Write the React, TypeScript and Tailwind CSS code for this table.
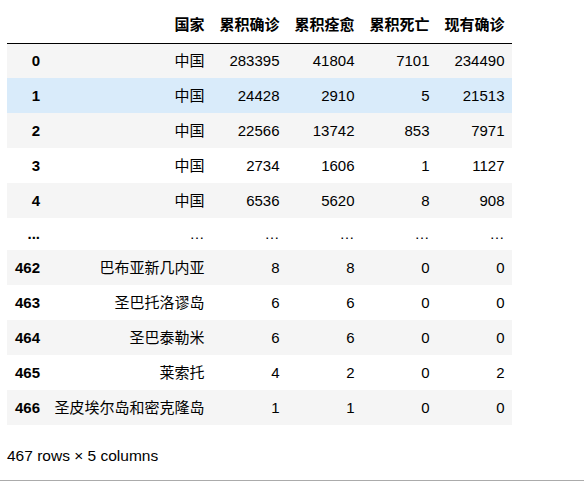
import React from "react";

type Row = [string, string, string, string, string, string];

const top: Row[] = [
  ["0", "中国", "283395", "41804", "7101", "234490"],
  ["1", "中国", "24428", "2910", "5", "21513"],
  ["2", "中国", "22566", "13742", "853", "7971"],
  ["3", "中国", "2734", "1606", "1", "1127"],
  ["4", "中国", "6536", "5620", "8", "908"],
];
const bottom: Row[] = [
  ["462", "巴布亚新几内亚", "8", "8", "0", "0"],
  ["463", "圣巴托洛谬岛", "6", "6", "0", "0"],
  ["464", "圣巴泰勒米", "6", "6", "0", "0"],
  ["465", "莱索托", "4", "2", "0", "2"],
  ["466", "圣皮埃尔岛和密克隆岛", "1", "1", "0", "0"],
];

const headers = ["国家", "累积确诊", "累积痊愈", "累积死亡", "现有确诊"];

function DataRow({ r, bg }: { r: Row; bg: string }) {
  return (
    <tr className={`h-[35px] ${bg}`}>
      <th className="px-[7px] text-right font-bold">{r[0]}</th>
      {r.slice(1).map((c, i) => (
        <td key={i} className="px-[7.5px] text-right font-normal">
          {c}
        </td>
      ))}
    </tr>
  );
}

export default function App() {
  return (
    <div
      className="min-h-[486px] bg-white pt-[7px] text-black"
      style={{ fontFamily: '"Liberation Sans", "Noto Sans CJK SC", sans-serif' }}
    >
      <div className="px-[7px]">
        <table className="table-fixed border-collapse text-[15px] leading-[18px]">
          <colgroup>
            <col className="w-[40px]" />
            <col className="w-[165px]" />
            <col className="w-[75px]" />
            <col className="w-[75px]" />
            <col className="w-[75px]" />
            <col className="w-[75px]" />
          </colgroup>
          <thead>
            <tr className="h-[36px] border-b border-black">
              <th></th>
              {headers.map((h) => (
                <th key={h} className="px-[7.5px] text-right font-bold">
                  {h}
                </th>
              ))}
            </tr>
          </thead>
          <tbody>
            {top.map((r, i) => (
              <DataRow
                key={r[0]}
                r={r}
                bg={i === 1 ? "bg-[#d9ebfa]" : i % 2 === 0 ? "bg-[#f5f5f5]" : "bg-white"}
              />
            ))}
            <tr className="h-[32px] bg-white">
              <th className="px-[7px] text-right font-bold">...</th>
              {[0, 1, 2, 3, 4].map((i) => (
                <td key={i} className="px-[7.5px] text-right">
                  …
                </td>
              ))}
            </tr>
            {bottom.map((r, i) => (
              <DataRow key={r[0]} r={r} bg={i % 2 === 0 ? "bg-[#f5f5f5]" : "bg-white"} />
            ))}
          </tbody>
        </table>
        <p className="mt-[22px] text-[15.5px] leading-[18px]">467 rows × 5 columns</p>
      </div>
      <div className="mt-[15px] border-b border-[#ababab]"></div>
    </div>
  );
}
